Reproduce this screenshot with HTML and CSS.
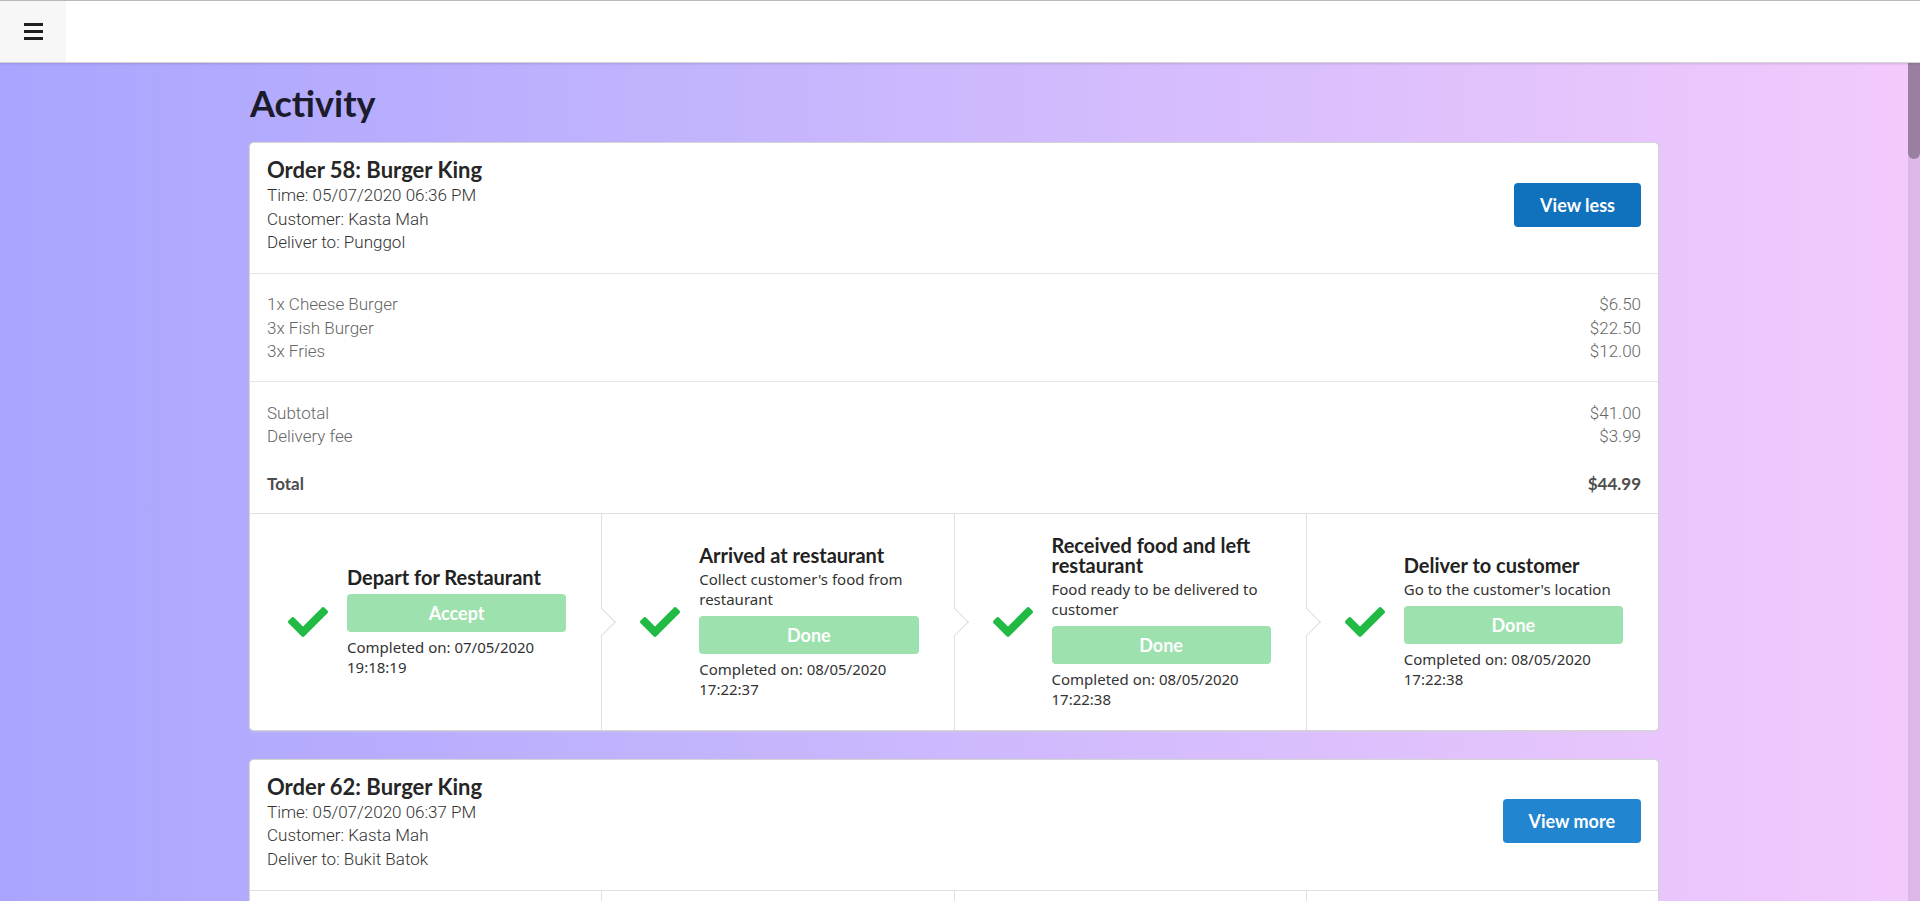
FILE: index.html
```html
<!DOCTYPE html>
<html lang="en">
<head>
<meta charset="utf-8">
<title>Activity</title>
<link rel="stylesheet" href="styles.css">
</head>
<body>
<div class="app">
  <nav class="topbar">
    <button class="menu-btn" aria-label="Menu">
      <svg class="menu-icon" viewBox="0 0 19 17" width="19" height="17"><rect x="0" y="0" width="19" height="3"/><rect x="0" y="7" width="19" height="3"/><rect x="0" y="14" width="19" height="3"/></svg>
    </button>
  </nav>
  <div class="main">
    <main class="scroller">
      <div class="container">
        <h1 class="page-title">Activity</h1>

        <section class="order-card">
          <div class="order-head">
            <div class="order-info">
              <div class="order-title">Order 58: Burger King</div>
              <div class="info-line">Time: 05/07/2020 06:36 PM</div>
              <div class="info-line">Customer: Kasta Mah</div>
              <div class="info-line">Deliver to: Punggol</div>
            </div>
            <button class="btn-view btn-less">View less</button>
          </div>
          <div class="order-items">
            <div class="line-row"><span>1x Cheese Burger</span><span>$6.50</span></div>
            <div class="line-row"><span>3x Fish Burger</span><span>$22.50</span></div>
            <div class="line-row"><span>3x Fries</span><span>$12.00</span></div>
          </div>
          <div class="order-summary">
            <div class="line-row"><span>Subtotal</span><span>$41.00</span></div>
            <div class="line-row"><span>Delivery fee</span><span>$3.99</span></div>
            <div class="total-row"><span>Total</span><span>$44.99</span></div>
          </div>
          <div class="steps">
            <div class="step">
              <svg class="check" viewBox="0 64 512 384"><path d="M173.898 439.404l-166.4-166.4c-9.997-9.997-9.997-26.206 0-36.204l36.203-36.204c9.997-9.998 26.207-9.998 36.204 0L192 312.69 432.095 72.596c9.997-9.997 26.207-9.997 36.204 0l36.203 36.204c9.997 9.997 9.997 26.206 0 36.204l-294.4 294.401c-9.998 9.997-26.207 9.997-36.204-.001z"/></svg>
              <div class="step-content">
                <div class="step-title">Depart for Restaurant</div>
                <button class="step-btn" disabled>Accept</button>
                <div class="step-meta">Completed on: 07/05/2020 19:18:19</div>
              </div>
            </div>
            <div class="step">
              <svg class="check" viewBox="0 64 512 384"><path d="M173.898 439.404l-166.4-166.4c-9.997-9.997-9.997-26.206 0-36.204l36.203-36.204c9.997-9.998 26.207-9.998 36.204 0L192 312.69 432.095 72.596c9.997-9.997 26.207-9.997 36.204 0l36.203 36.204c9.997 9.997 9.997 26.206 0 36.204l-294.4 294.401c-9.998 9.997-26.207 9.997-36.204-.001z"/></svg>
              <div class="step-content">
                <div class="step-title">Arrived at restaurant</div>
                <div class="step-desc">Collect customer's food from restaurant</div>
                <button class="step-btn" disabled>Done</button>
                <div class="step-meta">Completed on: 08/05/2020 17:22:37</div>
              </div>
            </div>
            <div class="step">
              <svg class="check" viewBox="0 64 512 384"><path d="M173.898 439.404l-166.4-166.4c-9.997-9.997-9.997-26.206 0-36.204l36.203-36.204c9.997-9.998 26.207-9.998 36.204 0L192 312.69 432.095 72.596c9.997-9.997 26.207-9.997 36.204 0l36.203 36.204c9.997 9.997 9.997 26.206 0 36.204l-294.4 294.401c-9.998 9.997-26.207 9.997-36.204-.001z"/></svg>
              <div class="step-content">
                <div class="step-title">Received food and left restaurant</div>
                <div class="step-desc">Food ready to be delivered to customer</div>
                <button class="step-btn" disabled>Done</button>
                <div class="step-meta">Completed on: 08/05/2020 17:22:38</div>
              </div>
            </div>
            <div class="step">
              <svg class="check" viewBox="0 64 512 384"><path d="M173.898 439.404l-166.4-166.4c-9.997-9.997-9.997-26.206 0-36.204l36.203-36.204c9.997-9.998 26.207-9.998 36.204 0L192 312.69 432.095 72.596c9.997-9.997 26.207-9.997 36.204 0l36.203 36.204c9.997 9.997 9.997 26.206 0 36.204l-294.4 294.401c-9.998 9.997-26.207 9.997-36.204-.001z"/></svg>
              <div class="step-content">
                <div class="step-title">Deliver to customer</div>
                <div class="step-desc">Go to the customer's location</div>
                <button class="step-btn" disabled>Done</button>
                <div class="step-meta">Completed on: 08/05/2020 17:22:38</div>
              </div>
            </div>
          </div>
        </section>

        <section class="order-card">
          <div class="order-head">
            <div class="order-info">
              <div class="order-title">Order 62: Burger King</div>
              <div class="info-line">Time: 05/07/2020 06:37 PM</div>
              <div class="info-line">Customer: Kasta Mah</div>
              <div class="info-line">Deliver to: Bukit Batok</div>
            </div>
            <button class="btn-view btn-more">View more</button>
          </div>
          <div class="steps">
            <div class="step">
              <svg class="check" viewBox="0 64 512 384"><path d="M173.898 439.404l-166.4-166.4c-9.997-9.997-9.997-26.206 0-36.204l36.203-36.204c9.997-9.998 26.207-9.998 36.204 0L192 312.69 432.095 72.596c9.997-9.997 26.207-9.997 36.204 0l36.203 36.204c9.997 9.997 9.997 26.206 0 36.204l-294.4 294.401c-9.998 9.997-26.207 9.997-36.204-.001z"/></svg>
              <div class="step-content">
                <div class="step-title">Depart for Restaurant</div>
                <button class="step-btn" disabled>Accept</button>
                <div class="step-meta">Completed on: 07/05/2020 19:18:25</div>
              </div>
            </div>
            <div class="step">
              <svg class="check" viewBox="0 64 512 384"><path d="M173.898 439.404l-166.4-166.4c-9.997-9.997-9.997-26.206 0-36.204l36.203-36.204c9.997-9.998 26.207-9.998 36.204 0L192 312.69 432.095 72.596c9.997-9.997 26.207-9.997 36.204 0l36.203 36.204c9.997 9.997 9.997 26.206 0 36.204l-294.4 294.401c-9.998 9.997-26.207 9.997-36.204-.001z"/></svg>
              <div class="step-content">
                <div class="step-title">Arrived at restaurant</div>
                <div class="step-desc">Collect customer's food from restaurant</div>
                <button class="step-btn" disabled>Done</button>
                <div class="step-meta">Completed on: 08/05/2020 17:22:40</div>
              </div>
            </div>
            <div class="step">
              <svg class="check" viewBox="0 64 512 384"><path d="M173.898 439.404l-166.4-166.4c-9.997-9.997-9.997-26.206 0-36.204l36.203-36.204c9.997-9.998 26.207-9.998 36.204 0L192 312.69 432.095 72.596c9.997-9.997 26.207-9.997 36.204 0l36.203 36.204c9.997 9.997 9.997 26.206 0 36.204l-294.4 294.401c-9.998 9.997-26.207 9.997-36.204-.001z"/></svg>
              <div class="step-content">
                <div class="step-title">Received food and left restaurant</div>
                <div class="step-desc">Food ready to be delivered to customer</div>
                <button class="step-btn" disabled>Done</button>
                <div class="step-meta">Completed on: 08/05/2020 17:22:41</div>
              </div>
            </div>
            <div class="step">
              <svg class="check" viewBox="0 64 512 384"><path d="M173.898 439.404l-166.4-166.4c-9.997-9.997-9.997-26.206 0-36.204l36.203-36.204c9.997-9.998 26.207-9.998 36.204 0L192 312.69 432.095 72.596c9.997-9.997 26.207-9.997 36.204 0l36.203 36.204c9.997 9.997 9.997 26.206 0 36.204l-294.4 294.401c-9.998 9.997-26.207 9.997-36.204-.001z"/></svg>
              <div class="step-content">
                <div class="step-title">Deliver to customer</div>
                <div class="step-desc">Go to the customer's location</div>
                <button class="step-btn" disabled>Done</button>
                <div class="step-meta">Completed on: 08/05/2020 17:22:42</div>
              </div>
            </div>
          </div>
        </section>
      </div>
    </main>
    <div class="rail" aria-hidden="true"><div class="rail-thumb"></div></div>
  </div>
</div>
</body>
</html>
```

FILE: styles.css
```css
* { box-sizing: border-box; }

html, body {
  margin: 0;
  height: 100%;
}

body {
  overflow: hidden;
  font-family: Lato, "Helvetica Neue", Arial, sans-serif;
  color: rgba(0, 0, 0, 0.87);
}

.app {
  height: 100vh;
  display: flex;
  flex-direction: column;
}

.topbar {
  flex: none;
  height: 63px;
  display: flex;
  background: #fff;
  border-top: 1px solid #b9b9b9;
  border-bottom: 1px solid #d4d4d5;
  box-shadow: 0 1px 2px 0 rgba(34, 36, 38, 0.15);
  position: relative;
  z-index: 3;
}

.menu-btn {
  width: 66px;
  height: 100%;
  padding: 0;
  border: 0;
  background: #f7f7f7;
  display: flex;
  align-items: center;
  justify-content: center;
}

.menu-icon { fill: #1f1f1f; display: block; }

.main {
  flex: 1;
  min-height: 0;
  display: flex;
  background: linear-gradient(90deg, #a9a5fe 0%, #c9b7fd 45%, #f3cafc 100%);
}

.scroller {
  flex: 1;
  min-width: 0;
  overflow-y: auto;
  scrollbar-width: none;
}

.scroller::-webkit-scrollbar { display: none; }

.rail {
  flex: none;
  width: 12px;
  background: rgba(0, 0, 0, 0.09);
}

.rail-thumb {
  height: 96px;
  background: rgba(0, 0, 0, 0.3);
  border-radius: 0 0 6px 6px;
}

.container {
  width: 1408px;
  margin: 0 auto;
  padding: 17px 0 40px;
}

.page-title {
  margin: 0 0 17px;
  font: 700 36px/46px Lato, sans-serif;
  color: #1c1b2b;
}

.order-card {
  background: #fff;
  border-radius: 4px;
  box-shadow: 0 1px 3px 0 #d4d4d5, 0 0 0 1px #d4d4d5;
  margin-bottom: 30px;
  overflow: hidden;
}

.order-head {
  display: flex;
  align-items: center;
  justify-content: space-between;
  padding: 12px 17px 18.5px;
}

.order-title {
  font: 700 22px/29px Lato, sans-serif;
  color: #262626;
}

.info-line {
  font: 300 17px/23.5px Roboto, sans-serif;
  color: #333;
}

.btn-view {
  height: 44px;
  padding: 0 26px;
  border: 0;
  border-radius: 4px;
  color: #fff;
  font: 700 18px Lato, sans-serif;
}

.btn-less { background: #1071bd; }
.btn-more { background: #2185d0; }

.order-items {
  border-top: 1px solid #e6e6e6;
  padding: 19px 17px 17px;
}

.order-summary {
  border-top: 1px solid #e6e6e6;
  padding: 20px 17px 17px;
}

.line-row {
  display: flex;
  justify-content: space-between;
  font: 300 17px/23.5px Roboto, sans-serif;
  color: #666;
}

.total-row {
  display: flex;
  justify-content: space-between;
  margin-top: 23.5px;
  font: 700 17px/23.5px Lato, sans-serif;
  color: #4d4d4d;
}

.steps {
  display: flex;
  border-top: 1px solid #e0e0e0;
}

.step {
  flex: 1 1 0;
  min-width: 0;
  position: relative;
  display: flex;
  align-items: center;
  height: 216px;
  padding: 0 35px 0 38px;
  border-right: 1px solid #e0e0e0;
}

.step:last-child { border-right: 0; }

.step:not(:last-child)::after {
  content: "";
  position: absolute;
  top: 50%;
  right: 0;
  width: 20px;
  height: 20px;
  background: #fff;
  border: solid #dadada;
  border-width: 0 1px 1px 0;
  transform: translate(50%, -50%) rotate(-45deg);
  z-index: 2;
}

.check {
  flex: none;
  width: 40px;
  height: 30px;
  margin-right: 19px;
  fill: #21ba45;
}

.step-content {
  flex: 1;
  min-width: 0;
}

.step-title {
  font: 700 20px/20px Lato, sans-serif;
  color: #222;
}

.step-desc {
  margin-top: 4px;
  font: 400 15px/20px "Noto Sans", sans-serif;
  color: #333;
}

.step-btn {
  display: block;
  width: 100%;
  height: 38px;
  margin: 7px 0 5px;
  padding: 0;
  border: 0;
  border-radius: 4px;
  background: #9de1ae;
  color: #fff;
  font: 700 18px Lato, sans-serif;
}

.step-meta {
  font: 400 15px/20px "Noto Sans", sans-serif;
  color: #333;
}
```
